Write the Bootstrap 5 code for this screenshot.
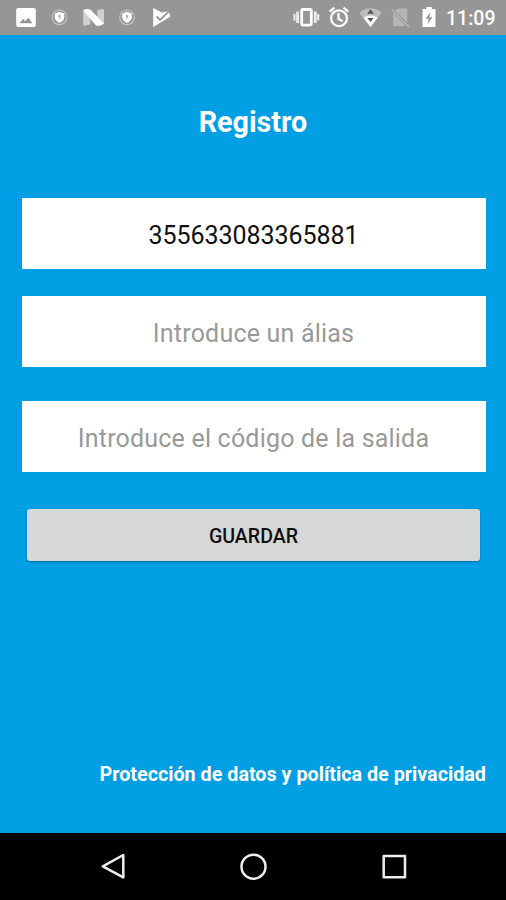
<!DOCTYPE html>
<html lang="es">
<head>
<meta charset="utf-8">
<meta name="viewport" content="width=device-width, initial-scale=1">
<title>Registro</title>
<link href="https://cdn.jsdelivr.net/npm/bootstrap@5.3.0/dist/css/bootstrap.min.css" rel="stylesheet">
<style>
body { font-family: Roboto, "Liberation Sans", sans-serif; background: #009ee3; height: 900px; overflow: hidden; }
.status-bar { height: 35px; background: #969696; }
.status-bar svg { display: block; width: 100%; height: 35px; }
.clock { font-size: 19.5px; font-weight: 500; }
.screen { padding: 69px 20px 0 22px; }
.title { font-size: 28.7px; line-height: 36px; font-weight: 700; margin: 0 2px 58px 0; }
.field, .field:focus { height: 71px; border: 0; border-radius: 0; background: #fff; color: #111; font-size: 25px; text-align: center; padding: 3px 1px 0 0; box-shadow: none; }
.field::placeholder { color: #999; opacity: 1; }
.field-id { margin-bottom: 27px; letter-spacing: -.05px; }
.field-alias { margin-bottom: 34px; letter-spacing: .2px; }
.field-code { margin-bottom: 37px; letter-spacing: .2px; }
.save, .save:hover { height: 52px; margin: 0 6px 0 5px; padding: 3px 0 0; border: 0; border-radius: 3px; background: #d6d7d7; color: #111; font-size: 19.6px; font-weight: 500; box-shadow: 0 1px 2px rgba(0,0,0,.3); }
.privacy { font-size: 19.75px; line-height: 24px; font-weight: 700; margin-bottom: 46px; }
.nav-keys { height: 67px; background: #000; }
</style>
</head>
<body class="d-flex flex-column">
<header class="status-bar flex-shrink-0">
<svg viewBox="0 0 506 35" fill="#fff" aria-label="Estado">
  <!-- picture -->
  <path fill-rule="evenodd" d="M18.200 8h15.600q2 0 2 2v15q0 2-2 2H18.200q-2 0-2-2V10q0-2 2-2zM19.500 23.300h13l-4.200-5.600-3 3.500-2.300-2.400z"/>
  <!-- shields -->
  <g id="shield"><circle cx="59.500" cy="17.300" r="7.300" fill="none" stroke="#c4c4c4" stroke-width="1.200"/><path d="M59.500 11.800l4.800 1.800v3.500c0 2.800-1.900 4.600-4.800 6-2.900-1.400-4.800-3.200-4.800-6v-3.500z"/><path d="M59.500 14.800l1.200.7-.7 3h-1l-.7-3z" fill="#aaa"/></g>
  <use href="#shield" x="67.500"/>
  <!-- N -->
  <path fill="#d0d0d0" d="M83.200 10.500l7-1v15l-7 1.200zM97.300 10l6.700-1v14.800l-6.700 1.700z"/>
  <path d="M83.200 10.500q3.500-2.500 7.300-.8L104 23.700q-3.800 3-8.200 1.500z"/>
  <!-- play check -->
  <path d="M153.200 8l8.300 4.500 7-1.200 2 5.200-17.300 10.500z"/>
  <path d="M156.700 16.500l3.400 3.500 8.700-8.600" fill="none" stroke="#969696" stroke-width="1.800"/>
  <!-- vibration -->
  <g fill="none" stroke="#fff"><rect x="301.700" y="9.500" width="9.600" height="15.600" rx="1" stroke-width="2.800"/><path stroke="#ededed" stroke-width="2.800" d="M297.600 11.500v11.600M315.300 11.500v11.600"/><path stroke="#ededed" stroke-width="2" d="M294.500 14v6.500M318.200 14v6.500"/></g>
  <!-- alarm -->
  <g fill="none" stroke="#fff" stroke-width="2.200"><circle cx="339" cy="18.200" r="7.900"/><path d="M329.700 11.700l4.800-4M348.300 11.700l-4.800-4M338.500 13v5.800l4.200 2.500"/></g>
  <!-- wi-fi -->
  <path fill="#bdbdbd" d="M359.200 12.500q11.300-8.500 22.600 0L370.500 27z"/>
  <path d="M363.400 17.800q7.100-4.600 14.200 0L370.500 27z"/>
  <path fill="#555" d="M370.500 9.200l3.400 4.600h-6.800zM367.300 17.900h6.400l-3.200 4.200z"/>
  <!-- no sim -->
  <path fill="#b5b5b5" d="M398.500 8.500h8.700v14.300L395.300 10.500zM393.200 12.800L405.500 26h-12.300z"/>
  <path d="M391.800 9.200L409 27" stroke="#b5b5b5" stroke-width="1.600"/>
  <!-- battery -->
  <path fill-rule="evenodd" d="M426.300 9V7h5.600v2h3.600v18h-13V9zM430.500 12l-5 6.800h3.200l-1.200 5.400 5-6.900h-3.200z"/>
  <text class="clock" x="446" y="25">11:09</text>
</svg>
</header>
<main class="screen flex-grow-1 d-flex flex-column">
  <h1 class="title text-white text-center">Registro</h1>
  <input class="form-control field field-id" value="355633083365881" aria-label="Identificador">
  <input class="form-control field field-alias" placeholder="Introduce un álias" aria-label="Alias">
  <input class="form-control field field-code" placeholder="Introduce el código de la salida" aria-label="Código">
  <button class="btn save text-uppercase" type="button">Guardar</button>
  <a class="privacy text-white text-decoration-none text-end text-nowrap mt-auto" href="#">Protección de datos y política de privacidad</a>
</main>
<footer class="nav-keys flex-shrink-0">
<svg class="d-block" width="506" height="67" viewBox="0 0 506 67" fill="none" stroke="#eee" stroke-width="2.500" stroke-linejoin="round">
  <path d="M123.300 22v22.400L102.800 33.300z"/><circle cx="253.500" cy="33.700" r="12"/><rect x="383.700" y="23" width="21.300" height="21.300"/>
</svg>
</footer>
<script src="https://cdn.jsdelivr.net/npm/bootstrap@5.3.0/dist/js/bootstrap.bundle.min.js"></script>
</body>
</html>
